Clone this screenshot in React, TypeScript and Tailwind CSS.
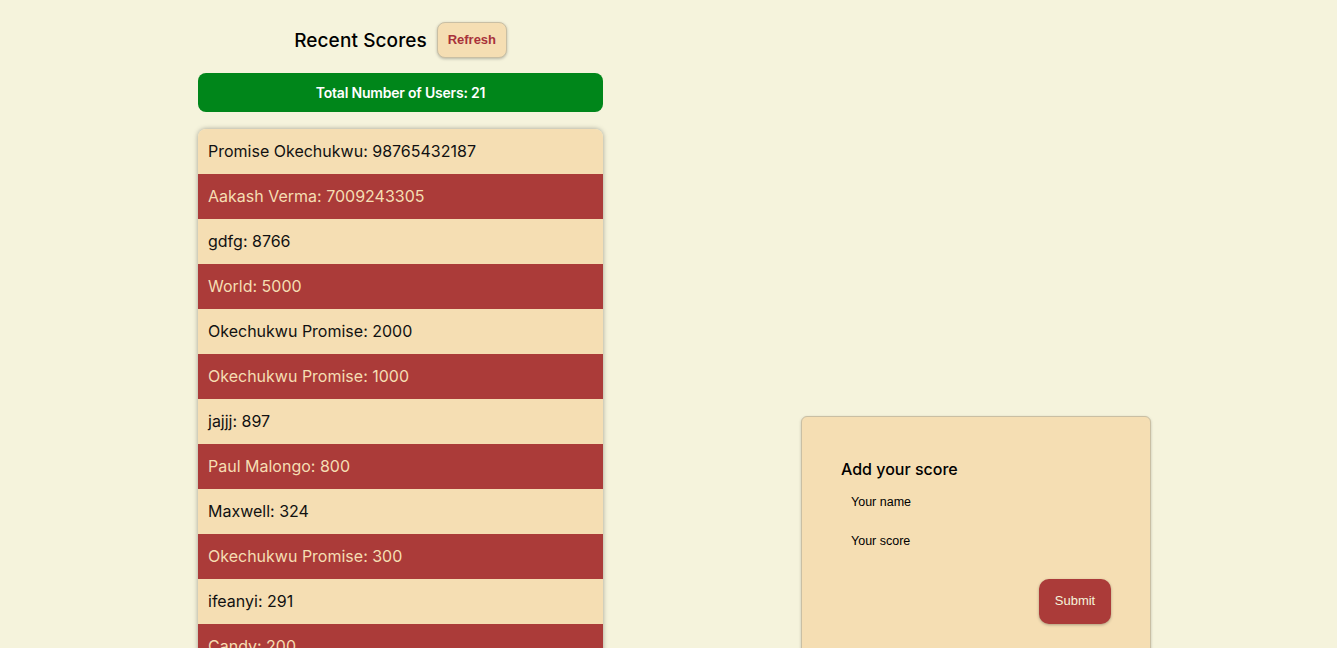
import React from "react";

const scores = [
  { name: "Promise Okechukwu", score: 98765432187 },
  { name: "Aakash Verma", score: 7009243305 },
  { name: "gdfg", score: 8766 },
  { name: "World", score: 5000 },
  { name: "Okechukwu Promise", score: 2000 },
  { name: "Okechukwu Promise", score: 1000 },
  { name: "jajjj", score: 897 },
  { name: "Paul Malongo", score: 800 },
  { name: "Maxwell", score: 324 },
  { name: "Okechukwu Promise", score: 300 },
  { name: "ifeanyi", score: 291 },
  { name: "Candy", score: 200 },
  { name: "Ada", score: 150 },
  { name: "John", score: 120 },
];

const poppins = "font-['Inter','Noto_Sans',sans-serif]";
const arial = "font-['Liberation_Sans',Arial,sans-serif]";

const App: React.FC = () => {
  return (
    <div className={`min-h-screen bg-[#f5f3dc] ${poppins}`}>
      <div className="flex items-start pl-[198px] gap-[198px]">
        {/* Leaderboard */}
        <section className="w-[405px] flex flex-col">
          <div className="flex items-center justify-center gap-[10px] pt-[22px]">
            <h2 className="text-[19px] font-medium text-black tracking-[0.1px] pt-[3px]">Recent Scores</h2>
            <button
              className={`h-[36px] w-[70px] rounded-[8px] bg-[#f5deb3] border border-[#c9bfa4] shadow-[0_1px_3px_rgba(0,0,0,0.25)] text-[13px] font-bold text-[#a8323a] ${arial}`}
            >
              Refresh
            </button>
          </div>

          <div className="mt-[15px] h-[39px] rounded-[8px] bg-[#00861a] flex items-center justify-center">
            <p className="text-[14px] font-semibold text-white tracking-[-0.2px]">Total Number of Users: 21</p>
          </div>

          <ul className="mt-[17px] rounded-t-[8px] overflow-hidden shadow-[0_0_5px_rgba(0,0,0,0.35)]">
            {scores.map((s, i) => (
              <li
                key={i}
                className={`h-[45px] flex items-center px-[10px] pb-[1px] text-[16px] ${
                  i % 2 === 0 ? "bg-[#f5deb3] text-[#111]" : "bg-[#ab3b39] text-[#f5deb3]"
                }`}
              >
                {s.name}: {s.score}
              </li>
            ))}
          </ul>
        </section>

        {/* Add score form */}
        <section className="mt-[416px] w-[350px] h-[300px] rounded-[6px] bg-[#f5deb3] border border-[#c9bfa4] shadow-[0_1px_3px_rgba(0,0,0,0.2)] pl-[39px] pr-[39px] pt-[40px]">
          <h3 className="text-[16px] font-medium text-black">Add your score</h3>
          <form className={`flex flex-col ${arial} text-[12.5px] text-black`}>
            <label className="pl-[10px] mt-[12px]">Your name</label>
            <label className="pl-[10px] mt-[20px]">Your score</label>
            <div className="flex justify-end mt-[28px]">
              <button
                type="button"
                className="w-[72px] h-[45px] rounded-[10px] bg-[#ab3b39] text-[#f5f3dc] text-[13px] shadow-[0_1px_3px_rgba(0,0,0,0.3)]"
              >
                Submit
              </button>
            </div>
          </form>
        </section>
      </div>
    </div>
  );
};

export default App;
